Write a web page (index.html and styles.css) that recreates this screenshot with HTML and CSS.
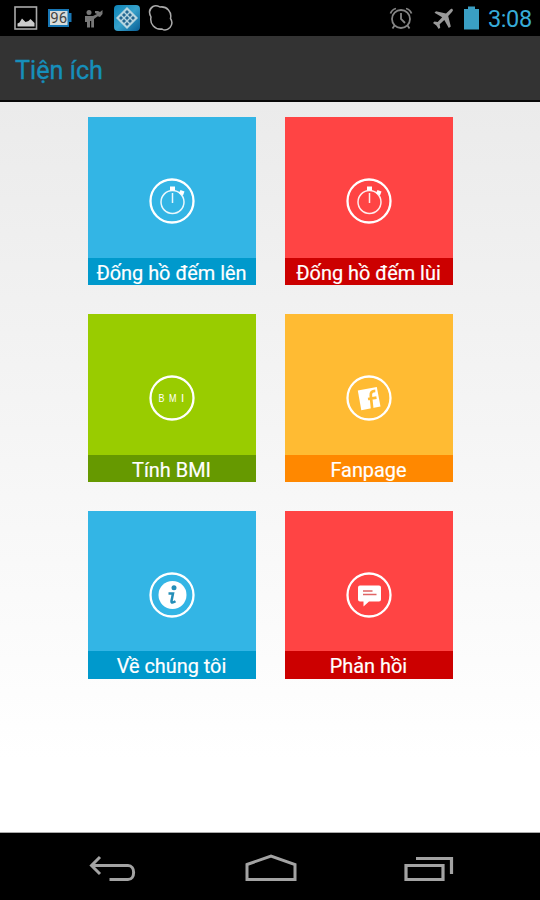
FILE: index.html
```html
<!DOCTYPE html>
<html lang="vi">
<head>
<meta charset="utf-8">
<title>Tiện ích</title>
<link rel="stylesheet" href="styles.css">
</head>
<body>
<div class="screen">
  <div class="status">
    <div class="notifications">
      <svg width="24" height="26" viewBox="0 0 24 26"><rect x="1" y="2" width="21.500" height="22" fill="none" stroke="#aaa" stroke-width="1.600"/><path d="M3.500 21.500v-3l2-1 2.500-4 3.500 3.500 3-1 2-2 4 4v3.500z" fill="#ccc"/></svg>
      <svg width="24" height="26" viewBox="0 0 24 26"><path d="M0 4h21v4h2.500v9H21v5H0z" fill="#1877b5"/><rect x="2" y="6" width="17.500" height="14" fill="#d8dcda"/><text x="10.700" y="17.500" class="badge-text">96</text></svg>
      <svg width="20" height="26" viewBox="0 0 20 26"><g fill="#777"><circle cx="5" cy="7.500" r="2.500"/><path d="M1 11h8l4-2 1 2-4 3v8.500H7.200V16H6v6.500H3V17H1z"/><path d="M11 6h3l2 1 2.500-2v4L16 12l-3-1v-2l-2-1z"/></g></svg>
      <svg width="26" height="28" viewBox="0 0 26 28"><defs><linearGradient id="app" x2="1" y2="1"><stop stop-color="#0d83b6"/><stop offset=".5" stop-color="#37a1ca"/><stop offset="1" stop-color="#085d94"/></linearGradient></defs><rect y="1" width="26" height="26" rx="4" fill="url(#app)"/><path d="M13 3l11 11-11 11L2 14z" fill="#b7d5df"/><g fill="#246791"><path d="M13 6l2 2-2 2-2-2zM10 9l2 2-2 2-2-2zM16 9l2 2-2 2-2-2zM7 12l2 2-2 2-2-2zM13 12l2 2-2 2-2-2zM19 12l2 2-2 2-2-2zM10 15l2 2-2 2-2-2zM16 15l2 2-2 2-2-2zM13 18l2 2-2 2-2-2z"/></g></svg>
      <svg width="26" height="28" viewBox="0 0 26 28"><path d="M5 2.500C8 .9 10 2 12 3c7-1 12 5 10.500 11.500 2 3 2 6-.5 9-3 3-6 3-8 1.500C7 26 1.500 20 3 13 .8 9 1 5 5 2.500z" fill="none" stroke="#aaa" stroke-width="1.500"/></svg>
    </div>
    <div class="system">
      <svg class="alarm" width="24" height="26" viewBox="0 0 24 26"><g fill="none" stroke="#858585" stroke-width="1.800"><circle cx="12" cy="14" r="9"/><path d="M12 8v6l4 4M1.500 8.500Q3 4.500 7 3.500M22.500 8.500Q21 4.500 17 3.500M5.500 20.500l-2 3M18.500 20.500l2 3"/></g></svg>
      <svg class="plane" width="21" height="26" viewBox="0 0 21 26"><path d="M19.500 4.200c1 .9.200 2-1 3.300L15.200 11l2.600 10.500-2 1.500-4.500-8-4.600 4.300.5 3.500-1.500 1.200-2.300-3.600L0 18l1.400-1.500 3.300.4 4.500-4.600L1.500 7.800 3 6.200l10 2.300 3.500-3.300c1.200-1 2.200-1.800 3-1z" fill="#999"/></svg>
      <svg class="battery" width="16" height="26" viewBox="0 0 16 26"><path d="M0 4h4V1.500h7V4h4v20.500H0z" fill="#3a9fc4"/></svg>
      <span class="clock">3:08</span>
    </div>
  </div>

  <header class="header"><h1>Tiện ích</h1></header>

  <main class="content">
    <div class="grid">
      <div class="tile blue">
        <svg class="icon" viewBox="0 0 46 46"><circle class="ring" cx="23" cy="23" r="21.500"/><circle class="dial" cx="23.500" cy="24" r="11.500"/><path class="dial" d="M23.500 15v10M31 16l2-2"/><path class="solid" d="M21 8.500h5v4h-5zM31.500 12l4 1.500-1.500 4-4-2.500z"/></svg>
        <div class="label">Đống hồ đếm lên</div>
      </div>
      <div class="tile red">
        <svg class="icon" viewBox="0 0 46 46"><circle class="ring" cx="23" cy="23" r="21.500"/><circle class="dial" cx="23.500" cy="24" r="11.500"/><path class="dial" d="M23.500 15v10M31 16l2-2"/><path class="solid" d="M21 8.500h5v4h-5zM31.500 12l4 1.500-1.500 4-4-2.500z"/></svg>
        <div class="label">Đống hồ đếm lùi</div>
      </div>
      <div class="tile green">
        <svg class="icon" viewBox="0 0 46 46"><circle class="ring" cx="23" cy="23" r="21.500"/><text class="bmi" y="27"><tspan x="9.500" textLength="6" lengthAdjust="spacingAndGlyphs">B</tspan><tspan x="20" textLength="7.500" lengthAdjust="spacingAndGlyphs">M</tspan><tspan x="32">I</tspan></text></svg>
        <div class="label">Tính BMI</div>
      </div>
      <div class="tile orange">
        <svg class="icon" viewBox="0 0 46 46"><circle class="ring" cx="23" cy="23" r="21.500"/><path class="solid" d="M11.800 15.500l19-3.500 3.700 19.500-19.200 3.800z"/><path d="M26.200 34l-1.400-13.500c-.3-3 1.200-4.700 4.500-4.700M22 24l8.500-1.300" fill="none" stroke="#fb3" stroke-width="2.700"/></svg>
        <div class="label">Fanpage</div>
      </div>
      <div class="tile blue">
        <svg class="icon" viewBox="0 0 46 46"><circle class="ring" cx="23" cy="23" r="21.500"/><circle class="solid" cx="23.500" cy="23" r="14"/><circle cx="25" cy="15.800" r="2.500" fill="#248eb8"/><path d="M19.500 21.500h4.500L22.500 29q-.2 3 4 .3" fill="none" stroke="#248eb8" stroke-width="2.500"/></svg>
        <div class="label">Về chúng tôi</div>
      </div>
      <div class="tile red">
        <svg class="icon" viewBox="0 0 46 46"><circle class="ring" cx="23" cy="23" r="21.500"/><path class="solid" d="M14 13.500h19q2 0 2 2v12q0 2-2 2H23l-5.500 5v-5H14q-2 0-2-2v-12q0-2 2-2z"/><path d="M17 19h9.500M17 22.500h13.500" stroke="#e06464" stroke-width="1.600"/></svg>
        <div class="label">Phản hồi</div>
      </div>
    </div>
  </main>

  <nav class="nav">
    <svg width="48" height="30" viewBox="0 0 48 30"><path d="M11 3l-8.500 8.500L11 20M3 11.500h36c7.500 0 7.500 14 0 14H20.500" fill="none" stroke="#a3a3a3" stroke-width="3"/></svg>
    <svg width="52" height="30" viewBox="0 0 52 30"><path d="M2 10.500L26 2l24 8.500v15H2z" fill="none" stroke="#a3a3a3" stroke-width="3"/></svg>
    <svg width="50" height="30" viewBox="0 0 50 30"><path d="M2 11.500h37v14H2zM12 4.500h35.500V20" fill="none" stroke="#a3a3a3" stroke-width="3.200"/></svg>
  </nav>
</div>
</body>
</html>
```
FILE: styles.css
```css
* { box-sizing: border-box; }
body { margin: 0; background: #000; font-family: Roboto, "Noto Sans", sans-serif; }
svg { display: block; flex: none; }
.screen { width: 540px; height: 900px; display: flex; flex-direction: column; overflow: hidden; }

.status { height: 36px; background: #000; display: flex; justify-content: space-between; align-items: center; padding: 0 8px 0 14px; }
.notifications { display: flex; align-items: center; gap: 10px; }
.notifications svg:nth-child(3) { margin-left: 2px; }
.notifications svg:nth-child(5) { margin-left: -2px; }
.badge-text { font: 400 15px Roboto, sans-serif; fill: #444; text-anchor: middle; }
.system { display: flex; align-items: center; }
.plane { margin-left: 20px; }
.battery { margin-left: 10px; }
.clock { width: 44px; margin-left: 8px; padding-top: 1px; color: #37acd8; font-size: 23.500px; line-height: 36px; letter-spacing: -.4px; white-space: nowrap; }

.header { height: 66px; padding-left: 15px; background: #333; border-bottom: 2px solid #080808; display: flex; align-items: center; }
.header h1 { margin: 0; padding-top: 5px; color: #168fbb; font-size: 25.200px; line-height: 32px; font-weight: 400; -webkit-text-stroke: .35px #168fbb; }

.content { flex: 1; padding-top: 15.400px; background: linear-gradient(#ebebeb, #fff 90%); border-bottom: 1px solid #aaa; }
.grid { display: grid; grid-template-columns: 168px 168px; grid-auto-rows: 168px; gap: 28.800px 29px; justify-content: center; }
.tile { display: flex; flex-direction: column; align-items: center; justify-content: space-between; color: #fff; }
.icon { width: 46px; height: 46px; margin-top: 61px; }
.ring { fill: none; stroke: #fff; stroke-width: 2.300; }
.dial { fill: none; stroke: #fff; stroke-width: 1.500; opacity: .9; }
.solid { fill: #fff; }
.bmi { font: 11.500px "Liberation Sans", sans-serif; fill: #fff; }
.label { width: 100%; height: 27.500px; padding-top: 1px; font-size: 19.900px; line-height: 29px; text-align: center; white-space: nowrap; -webkit-text-stroke: .2px #fff; }
.blue { background: #33b5e5; }
.blue .label { background: #0099cc; }
.red { background: #ff4444; }
.red .label { background: #cc0000; }
.green { background: #99cc00; }
.green .label { background: #669900; }
.orange { background: #ffbb33; }
.orange .label { background: #ff8800; }

.nav { height: 67px; background: #000; display: flex; justify-content: space-between; align-items: center; padding: 4px 86px 0 89px; }
```
